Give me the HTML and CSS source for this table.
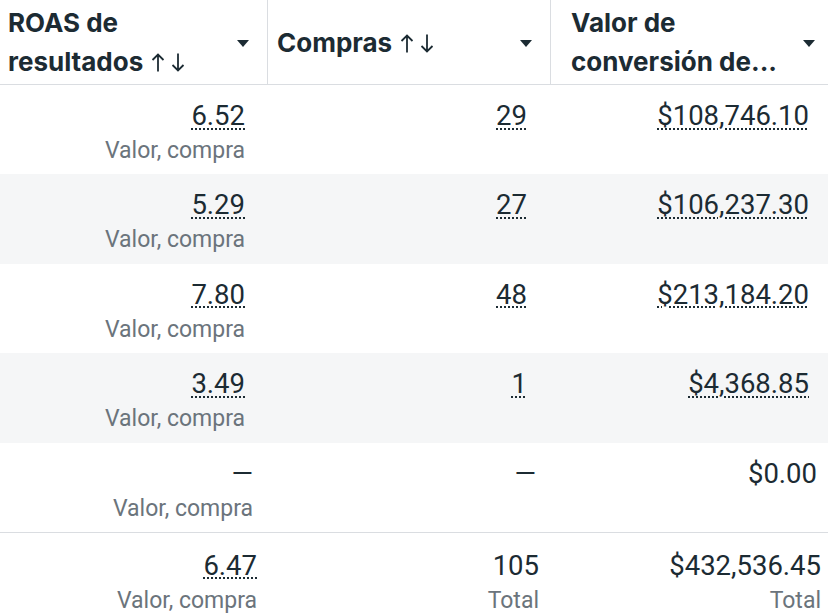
FILE: index.html
```html
<!DOCTYPE html>
<html lang="es">
<head>
<meta charset="utf-8">
<link rel="stylesheet" href="styles.css">
</head>
<body>
<div class="table">
  <div class="head">
    <div class="hcell h1">
      <span class="htext">ROAS de<br>resultados <svg class="sort" viewBox="0 0 34 19" width="34" height="19"><path d="M7 18.5V1.5M1.5 7L7 1.5L12.5 7M27 0.5v17M21.5 12L27 17.5L32.5 12" fill="none" stroke="#1c2b33" stroke-width="1.8"/></svg></span>
      <span class="caret"></span>
    </div>
    <div class="hcell h2">
      <span class="htext">Compras <svg class="sort" viewBox="0 0 34 19" width="34" height="19"><path d="M7 18.5V1.5M1.5 7L7 1.5L12.5 7M27 0.5v17M21.5 12L27 17.5L32.5 12" fill="none" stroke="#1c2b33" stroke-width="1.8"/></svg></span>
      <span class="caret"></span>
    </div>
    <div class="hcell h3">
      <span class="htext">Valor de<br>conversión de...</span>
      <span class="caret"></span>
    </div>
  </div>

  <div class="row">
    <div class="cell c1"><span class="num link">6.52</span><span class="sub">Valor, compra</span></div>
    <div class="cell c2"><span class="num link">29</span></div>
    <div class="cell c3"><span class="num link">$108,746.10</span></div>
  </div>
  <div class="row alt">
    <div class="cell c1"><span class="num link">5.29</span><span class="sub">Valor, compra</span></div>
    <div class="cell c2"><span class="num link">27</span></div>
    <div class="cell c3"><span class="num link">$106,237.30</span></div>
  </div>
  <div class="row">
    <div class="cell c1"><span class="num link">7.80</span><span class="sub">Valor, compra</span></div>
    <div class="cell c2"><span class="num link">48</span></div>
    <div class="cell c3"><span class="num link">$213,184.20</span></div>
  </div>
  <div class="row alt">
    <div class="cell c1"><span class="num link">3.49</span><span class="sub">Valor, compra</span></div>
    <div class="cell c2"><span class="num link">1</span></div>
    <div class="cell c3"><span class="num link">$4,368.85</span></div>
  </div>
  <div class="row plain">
    <div class="cell c1"><span class="num">—</span><span class="sub">Valor, compra</span></div>
    <div class="cell c2"><span class="num">—</span></div>
    <div class="cell c3"><span class="num">$0.00</span></div>
  </div>
  <div class="row total">
    <div class="cell c1"><span class="num link">6.47</span><span class="sub">Valor, compra</span></div>
    <div class="cell c2"><span class="num">105</span><span class="sub">Total</span></div>
    <div class="cell c3"><span class="num">$432,536.45</span><span class="sub">Total</span></div>
  </div>
</div>
</body>
</html>
```
FILE: styles.css
```css
html, body {
  margin: 0;
  padding: 0;
  background: #ffffff;
}

body {
  width: 828px;
  height: 614px;
  overflow: hidden;
  font-family: Roboto, "Liberation Sans", sans-serif;
  color: #1c2b33;
}

.table {
  display: flex;
  flex-direction: column;
}

.head {
  display: grid;
  grid-template-columns: 268px 283px 277px;
  height: 84px;
  border-bottom: 1px solid #dadde1;
}

.hcell {
  display: flex;
  align-items: center;
  justify-content: space-between;
  border-right: 1px solid #dadde1;
}

.hcell.h3 {
  border-right: none;
}

.h1 { padding: 0 18px 0 8px; }
.h2 { padding: 0 18px 0 9px; }
.h3 { padding: 0 13px 0 20px; }

.htext {
  font-family: Inter, Roboto, sans-serif;
  font-weight: 700;
  font-size: 26px;
  line-height: 39px;
  color: #1c2b33;
}

.sort {
  vertical-align: -1px;
  margin-left: 2px;
}

.caret {
  width: 0;
  height: 0;
  border-left: 6.5px solid transparent;
  border-right: 6.5px solid transparent;
  border-top: 7px solid #1c2b33;
  margin-top: 2px;
  flex: none;
}

.row {
  display: grid;
  grid-template-columns: 268px 283px 277px;
  height: 89.4px;
}

.row.alt {
  background: #f5f6f7;
}

.row.total {
  border-top: 1px solid #dadde1;
}

.cell {
  display: flex;
  flex-direction: column;
  align-items: flex-end;
  padding-top: 14px;
}

.c1 { padding-right: 23px; }
.c2 { padding-right: 24px; }
.c3 { padding-right: 19px; }

.plain .c1 { padding-right: 15px; }
.plain .c2 { padding-right: 15px; }
.plain .c3 { padding-right: 11px; }

.total .cell { padding-top: 16px; }
.total .c1 { padding-right: 11px; }
.total .c2 { padding-right: 12px; }
.total .c3 { padding-right: 7px; }

.num {
  font-size: 27.5px;
  line-height: 33px;
  color: #1c2b33;
}

.link {
  text-decoration: underline dotted #1c2b33;
  text-decoration-thickness: 2px;
  text-underline-offset: 3px;
}

.sub {
  margin-top: 5px;
  font-size: 23px;
  line-height: 28px;
  color: #6b747c;
}
```
